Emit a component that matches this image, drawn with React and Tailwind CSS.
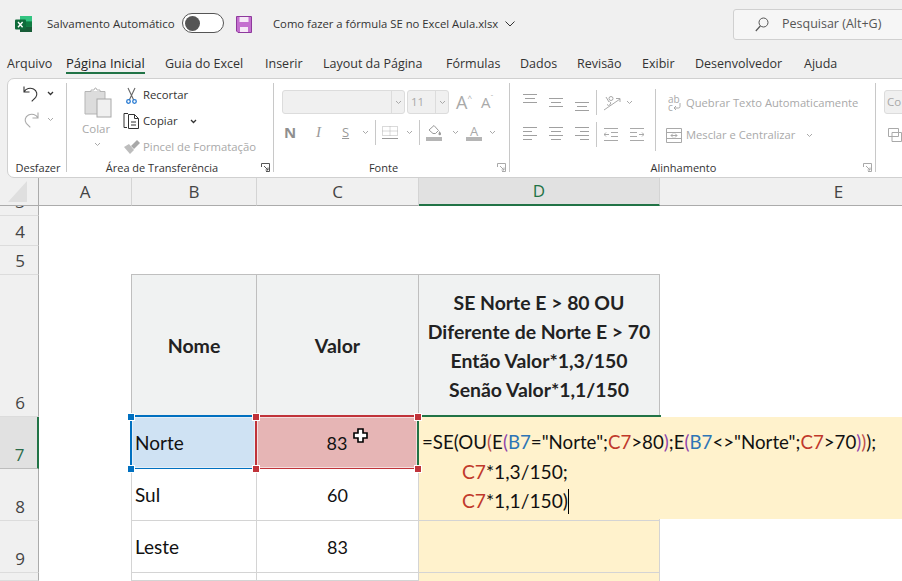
import React from "react";

const seg = "font-['Open_Sans','Noto_Sans',sans-serif]";
const cal = "font-['Lato','Noto_Sans',sans-serif]";

const Chev = ({ c = "#444", w = 7, sw = 1, className = "" }) => (
  <svg width={w} height="5" viewBox="0 0 7 5" className={`shrink-0 ${className}`}>
    <path d="M1 1l2.500 2.500L6 1" fill="none" stroke={c} strokeWidth={sw} />
  </svg>
);

const Launcher = ({ c = "#555" }) => (
  <svg width="9" height="9" viewBox="0 0 9 9" className="absolute right-[3px] top-[2px]">
    <path d="M.5 4V.5H8.500V8.500H5M3 3l4 4M7 4.500V7H4.500" fill="none" stroke={c} strokeWidth="1" />
  </svg>
);

const Excel = () => (
  <svg width="17" height="17" viewBox="0 0 17 17">
    <rect x="5" y="0" width="12" height="16" fill="#21a366" />
    <rect x="5" y="0" width="12" height="5.500" fill="#33c481" />
    <rect x="5" y="10.500" width="12" height="5.500" fill="#185c37" />
    <rect x="11" y="5.500" width="6" height="5" fill="#107c41" />
    <rect x="0" y="3.500" width="11" height="10" rx="1" fill="#0f6b3a" />
    <path d="M3 6l4.600 5.200M7.600 6L3 11.200" stroke="#fff" strokeWidth="1.400" />
  </svg>
);

const Save = () => (
  <svg width="16" height="17" viewBox="0 0 16 17">
    <path d="M.5.500h15v16H2L.5 15z" fill="#c46fcf" stroke="#8e3a9c" />
    <rect x="3.500" y="1" width="9" height="5" fill="#f6e9f7" />
    <rect x="4" y="11" width="8" height="5" fill="#f6e9f7" />
  </svg>
);

const Undo = ({ c, flip }) => (
  <svg width="16" height="17" viewBox="0 0 16 17" className={flip ? "-scale-x-100" : ""}>
    <path d="M1 1.500V7h5.500M1.200 6.800C3 3.500 7 2.300 10.500 4c3.500 1.800 4.300 5.600 2.200 8.300l-4 4" fill="none" stroke={c} strokeWidth="1.100" />
  </svg>
);

const Clipboard = () => (
  <svg width="28" height="31" viewBox="0 0 28 31">
    <path d="M1 4.500h20V27H1z" fill="#dcdcdc" stroke="#b5b5b5" />
    <path d="M7 4.500V3h3l1-2h1l1 2h3v1.500" fill="#fff" stroke="#b5b5b5" />
    <rect x="13" y="12" width="14" height="18" fill="#f0f0f0" stroke="#a8a8a8" />
  </svg>
);

const Scissors = () => (
  <svg width="11" height="17" viewBox="0 0 11 17">
    <path d="M2 1l5.700 12M9 1L3.300 13" fill="none" stroke="#666" strokeWidth="1.100" />
    <circle cx="2.500" cy="14.500" r="1.800" fill="none" stroke="#2b7cd3" strokeWidth="1.300" />
    <circle cx="8.500" cy="14.500" r="1.800" fill="none" stroke="#2b7cd3" strokeWidth="1.300" />
  </svg>
);

const Copy = () => (
  <svg width="17" height="16" viewBox="0 0 17 16">
    <path d="M5 .5H1v14h3" fill="none" stroke="#333" />
    <path d="M5.500 1.500h6l4 4v10h-10zM11.500 1.500v4h4M8 9h5M8 12h5" fill="none" stroke="#333" />
  </svg>
);

const Brush = () => (
  <svg width="18" height="16" viewBox="0 0 18 16">
    <path d="M1 8l6 7 4-4-5-6z" fill="#bdbdbd" />
    <path d="M8 7l6-6 3 3-6 6z" fill="#a8a8a8" />
  </svg>
);

const Lines = ({ ws, gap = 4 }) => (
  <svg width="14" height={(ws.length - 1) * gap + 1} className="block shrink-0">
    {ws.map(([x, w], i) => (
      <rect key={i} x={x} y={i * gap} width={w} height="1" fill="#a0a0a0" />
    ))}
  </svg>
);

const VSep = ({ h = "h-[25px]", cn = "" }) => <div className={`w-px shrink-0 bg-[#c8c8c8] ${h} ${cn}`} />;

const Group = ({ w, label, launcher, children, labelCn = "", lc }) => (
  <div className={`${w} shrink-0 h-[89px] mt-[4px] border-r border-[#c8c8c8] flex flex-col`}>
    <div className="flex-1 min-h-0">{children}</div>
    <div className={`relative h-[14px] -mb-[3px] text-[11px] leading-[14px] text-[#333] text-center ${labelCn}`}>
      {label}
      {launcher && <Launcher c={lc} />}
    </div>
  </div>
);

const gray = "text-[#a9a9a9]";
const tabs = [
  ["Arquivo", "w-[59px]"],
  ["Página Inicial", "w-[99px]", true],
  ["Guia do Excel", "w-[100px]"],
  ["Inserir", "w-[58px]"],
  ["Layout da Página", "w-[123px]"],
  ["Fórmulas", "w-[74px]"],
  ["Dados", "w-[57px]"],
  ["Revisão", "w-[65px]"],
  ["Exibir", "w-[53px]"],
  ["Desenvolvedor", "w-[109px]"],
  ["Ajuda", "w-[40px]"],
];

const RowH = ({ n, sel }) => (
  <div className={`relative overflow-hidden flex items-end justify-center pb-[3px] text-[17px] leading-[20px] border-r border-[#ababab] ${sel ? "bg-[#e1e1e1] text-[#2b6b49] border-r-2 border-r-[#217346] border-b border-b-[#bdbdbd]" : "bg-[#f0f0f0] text-[#444] border-b border-b-[#dcdcdc]"} pl-[2px]`}>
    {n}
  </div>
);

const Col = ({ l, sel }) => (
  <div className={`flex items-center justify-center text-[17px] border-r border-r-[#d4d4d4] ${sel ? "bg-[#e1e1e1] text-[#217346] border-b-2 border-b-[#217346]" : "bg-[#f0f0f0] text-[#444] border-b border-b-[#ababab]"}`}>
    {l}
  </div>
);

const Handle = ({ cn }) => <div className={`absolute w-[6px] h-[6px] outline outline-1 outline-white ${cn}`} />;

const R = ({ children }) => <span className="text-[#c0392b]">{children}</span>;
const B = ({ children }) => <span className="text-[#2e75b6]">{children}</span>;
const P = ({ children }) => <span className="text-[#8e44ad]">{children}</span>;
const M = ({ children }) => <span className="text-[#c0504d]">{children}</span>;

const bodyB = "border-b border-r border-[#d4d4d4] bg-white";
const nameT = `flex items-center pl-[3px] pt-[2px] text-[19px] text-[#111] ${cal}`;
const numT = `flex items-center justify-center pt-[2px] text-[18px] text-[#111] ${cal}`;

export default function App() {
  return (
    <div className={`w-[902px] h-[581px] overflow-hidden bg-[#f0f0f0] flex flex-col text-[#333] ${seg}`}>
      {/* title bar */}
      <div className="h-[48px] shrink-0 flex items-center overflow-hidden">
        <div className="ml-[15px] shrink-0"><Excel /></div>
        <span className="ml-[15px] shrink-0 text-[11.500px] w-[135px] whitespace-nowrap -mt-[1px]">Salvamento Automático</span>
        <div className="shrink-0 w-[42px] h-[20px] -mt-[2px] rounded-full border border-[#555] bg-white flex items-center pl-[2px]">
          <div className="w-[15px] h-[15px] rounded-full bg-[#555]" />
        </div>
        <div className="ml-[12px] shrink-0"><Save /></div>
        <span className="ml-[21px] shrink-0 text-[11.300px] w-[232px] whitespace-nowrap">Como fazer a fórmula SE no Excel Aula.xlsx</span>
        <svg width="10" height="6" viewBox="0 0 10 6" className="shrink-0"><path d="M.5.500L5 5 9.500.5" fill="none" stroke="#333" /></svg>
        <div className="ml-[218px] w-[180px] h-[31px] rounded-[3px] border border-[#d0d0d0] bg-[#f6f6f6] flex items-center pl-[21px] shrink-0">
          <svg width="14" height="15" viewBox="0 0 14 15"><circle cx="8.500" cy="5.500" r="4.500" fill="none" stroke="#555" /><path d="M5.300 9L.8 14" stroke="#555" strokeWidth="1.200" /></svg>
          <span className="ml-[13px] text-[12.500px] text-[#555] whitespace-nowrap">Pesquisar (Alt+G)</span>
        </div>
      </div>

      {/* tabs */}
      <div className="h-[30px] shrink-0 flex pl-[7px] text-[12.500px] text-[#333]">
        {tabs.map(([t, w, a]) => (
          <div key={t} className={`${w} shrink-0 whitespace-nowrap`}>
            <span className={`inline-block h-[26px] leading-[31px] ${a ? "font-medium text-[13px] text-[#222] border-b-2 border-[#217346]" : ""}`}>{t}</span>
          </div>
        ))}
      </div>

      {/* ribbon */}
      <div className="h-[100px] shrink-0 ml-[7px] -mr-[8px] bg-white border border-[#d0d0d0] rounded-[7px] flex overflow-hidden">
        <Group w="w-[59px]" label="Desfazer" labelCn="pl-[2px]">
          <div className="flex items-center pl-[15px] pt-[2px]">
            <Undo c="#333" />
            <Chev c="#333" sw={1.300} className="ml-[8px]" />
          </div>
          <div className="flex items-center pl-[15px] mt-[9px]">
            <Undo c="#a9a9a9" flip />
            <Chev c="#a9a9a9" className="ml-[8px]" />
          </div>
        </Group>

        <Group w="w-[207px]" label="Área de Transferência" launcher labelCn="pr-[16px]">
          <div className="flex">
            <div className="w-[56px] pl-[17px] pt-[4px] flex flex-col">
              <Clipboard />
              <span className={`text-[11.500px] mt-[3px] -ml-[2px] leading-[16px] ${gray}`}>Colar</span>
              <Chev c="#a9a9a9" className="ml-[10px] mt-[5px]" />
            </div>
            <div className="flex flex-col text-[11.300px]">
              <div className="h-[26px] flex items-center mt-[-1px]">
                <div className="w-[20px] pl-[3px] flex"><Scissors /></div>
                <span className="text-[#333]">Recortar</span>
              </div>
              <div className="h-[26px] flex items-center">
                <div className="w-[20px] flex"><Copy /></div>
                <span className="w-[47px] text-[#333]">Copiar</span>
                <Chev c="#333" sw={1.300} />
              </div>
              <div className="h-[26px] flex items-center">
                <div className="w-[20px] flex"><Brush /></div>
                <span className={`whitespace-nowrap ${gray}`}>Pincel de Formatação</span>
              </div>
            </div>
          </div>
        </Group>

        <Group w="w-[236px]" label="Fonte" launcher lc="#a9a9a9" labelCn="pr-[16px]">
          <div className="flex items-center pl-[8px] pt-[7px]">
            <div className="w-[123px] h-[24px] rounded-[3px] border border-[#dcdcdc] bg-[#f0f0f0] flex justify-end">
              <div className="w-[13px] border-l border-[#dcdcdc] flex items-center justify-center"><Chev c="#a9a9a9" /></div>
            </div>
            <div className="ml-[2px] w-[42px] h-[24px] rounded-[3px] border border-[#dcdcdc] bg-[#f0f0f0] flex justify-between">
              <span className={`pl-[3px] text-[11.500px] leading-[22px] ${gray}`}>11</span>
              <div className="w-[13px] border-l border-[#dcdcdc] flex items-center justify-center"><Chev c="#a9a9a9" /></div>
            </div>
            <span className={`ml-[7px] text-[18px] leading-[20px] ${gray}`}>A</span>
            <span className={`text-[8px] -mt-[8px] ${gray}`}>^</span>
            <span className={`ml-[9px] text-[15px] leading-[20px] ${gray}`}>A</span>
            <span className={`text-[7px] -mt-[8px] ${gray}`}>ˇ</span>
          </div>
          <div className="flex items-center pl-[10px] mt-[6px] h-[25px]">
            <span className="w-[32px] shrink-0 font-bold text-[15px] text-[#8f8f8f]">N</span>
            <span className="w-[26px] shrink-0 italic text-[15px] text-[#999] font-['Liberation_Serif',serif]">I</span>
            <span className="w-[20px] shrink-0 underline text-[13px] text-[#999]">S</span>
            <Chev c="#a9a9a9" />
            <VSep cn="ml-[6px]" />
            <svg width="16" height="14" viewBox="0 0 16 14" className="ml-[6px] shrink-0">
              <path d="M.5.500h15v9h-15z" fill="none" stroke="#b5b5b5" strokeDasharray="1 1" />
              <path d="M8 .5v9M.5 5h15" stroke="#b5b5b5" strokeDasharray="1 1" />
              <path d="M0 12.500h16" stroke="#999" />
            </svg>
            <Chev c="#a9a9a9" className="ml-[8px]" />
            <VSep cn="ml-[6px]" />
            <div className="ml-[6px] shrink-0 flex flex-col items-center w-[16px]">
              <svg width="15" height="11" viewBox="0 0 15 11"><path d="M2 5l5-4.500 4.500 5-3 3H6z" fill="none" stroke="#999" /><path d="M12.500 6c1 1.500 1.500 2 1.500 3a1 1 0 0 1-2.500 0c0-1 .5-1.500 1-3z" fill="#999" /></svg>
              <div className="w-[16px] h-[4px] bg-[#b5b5b5] mt-[1px]" />
            </div>
            <Chev c="#a9a9a9" className="ml-[10px]" />
            <div className="ml-[7px] shrink-0 flex flex-col items-center w-[16px]">
              <span className={`text-[13px] leading-[12px] ${gray}`}>A</span>
              <div className="w-[16px] h-[4px] bg-[#b5b5b5] mt-[0px]" />
            </div>
            <Chev c="#a9a9a9" className="ml-[7px]" />
          </div>
        </Group>

        <Group w="w-[366px]" label="Alinhamento" launcher lc="#a9a9a9" labelCn="pr-[18px]">
          <div className="flex h-[72px]">
            <div className="flex flex-col w-[86px] shrink-0 pl-[13px] pt-[7px]">
              <div className="flex items-start h-[25px] gap-[12px]">
                <div className="pt-[4px]"><Lines ws={[[0, 14], [2, 10], [0, 14]]} /></div>
                <div className="pt-[8px]"><Lines ws={[[0, 14], [2, 10], [0, 14]]} /></div>
                <div className="pt-[12px]"><Lines ws={[[0, 14], [2, 10], [0, 14]]} /></div>
                <VSep cn="-ml-[5px]" />
              </div>
              <div className="flex items-start h-[25px] mt-[7px] gap-[12px]">
                <div className="pt-[5px]"><Lines ws={[[0, 14], [0, 9], [0, 14], [0, 9]]} /></div>
                <div className="pt-[5px]"><Lines ws={[[0, 14], [2, 10], [0, 14], [2, 10]]} /></div>
                <div className="pt-[5px]"><Lines ws={[[0, 14], [5, 9], [0, 14], [5, 9]]} /></div>
                <VSep cn="-ml-[5px]" />
              </div>
            </div>
            <div className="w-[59px] shrink-0 flex flex-col pt-[7px]">
              <div className="flex items-center h-[25px] pl-[7px]">
                <svg width="18" height="16" viewBox="0 0 18 16">
                  <path d="M1 15L17 4M13 3.500h4V7" fill="none" stroke="#a9a9a9" />
                  <circle cx="8" cy="3.500" r="2" fill="none" stroke="#a9a9a9" />
                  <path d="M3 2l3 5M4 9.500a2 2 0 1 0 2.500-3" fill="none" stroke="#a9a9a9" />
                </svg>
                <Chev c="#a9a9a9" className="ml-[5px]" />
              </div>
              <div className="flex items-center h-[25px] mt-[7px] pl-[8px] gap-[12px]">
                <svg width="14" height="13" viewBox="0 0 14 13"><path d="M0 .5h14M0 12.500h14M7 4.500h7M7 8.500h7M0 6.500h5M0 6.500l2-2M0 6.500l2 2" fill="none" stroke="#a9a9a9" /></svg>
                <svg width="14" height="13" viewBox="0 0 14 13"><path d="M0 .5h14M0 12.500h14M0 4.500h7M0 8.500h7M9 6.500h5M14 6.500l-2-2M14 6.500l-2 2" fill="none" stroke="#a9a9a9" /></svg>
              </div>
            </div>
            <div className="flex flex-col pt-[1px] border-l border-[#c8c8c8] h-[62px] mt-[6px] pl-[10px]">
              <div className={`flex items-center h-[26px] text-[11.200px] ${gray} whitespace-nowrap`}>
                <div className="w-[20px] shrink-0 pl-[2px] flex flex-col text-[10px] leading-[8px]">
                  <span>ab</span>
                  <div className="flex items-center">
                    <span>c</span>
                    <svg width="8" height="8" viewBox="0 0 8 8"><path d="M7 0v3.500a1.500 1.500 0 0 1-1.500 1.500H1M3 3L1 5l2 2" fill="none" stroke="#a9a9a9" /></svg>
                  </div>
                </div>
                <span>Quebrar Texto Automaticamente</span>
              </div>
              <div className={`flex items-center h-[26px] mt-[6px] text-[11.200px] ${gray} whitespace-nowrap`}>
                <svg width="16" height="15" viewBox="0 0 16 15" className="mr-[4px]"><path d="M.5.500h15v14H.5zM.5 4.500h15M.5 10.500h15M5 7.500h6M5 7.500l2-2M5 7.500l2 2M11 7.500l-2-2M11 7.500l-2 2" fill="none" stroke="#a9a9a9" /></svg>
                <span className="w-[120px]">Mesclar e Centralizar</span>
                <Chev c="#a9a9a9" />
              </div>
            </div>
          </div>
        </Group>

        <div className="flex-1 h-[89px] mt-[4px] pl-[8px] pt-[7px]">
          <div className={`w-[30px] h-[24px] rounded-[3px] border border-[#dcdcdc] bg-[#f0f0f0] text-[11.500px] leading-[22px] pl-[2px] ${gray}`}>Co</div>
          <svg width="14" height="14" viewBox="0 0 14 14" className="ml-[4px] mt-[14px]"><path d="M.5.500h10v8H.5zM4 4.500h9.500v9H4z" fill="#fff" stroke="#a9a9a9" /></svg>
        </div>
      </div>

      {/* sheet */}
      <div className="relative flex-1 min-h-0 overflow-hidden bg-white grid grid-cols-[39px_93px_125px_162px_241px_358px] grid-rows-[28px_10px_30px_29px_142px_52px_52px_52px_1fr]">
        {/* header */}
        <div className="bg-[#f0f0f0] border-b border-[#ababab] border-r border-r-[#ababab] flex items-center justify-center">
          <div className="ml-[-3px] w-0 h-0 border-l-[19px] border-l-transparent border-b-[21px] border-b-[#dfdfdf]" />
        </div>
        <Col l="A" /><Col l="B" /><Col l="C" /><Col l="D" sel /><Col l="E" />

        <RowH n="3" /><div className="col-span-5" />
        <RowH n="4" /><div className="col-span-5" />
        <RowH n="5" /><div className="col-span-5 border-b border-[#bfbfbf] ml-[92px] mr-[358px]" />

        <RowH n="6" />
        <div />
        <div className={`bg-[#f0f2f2] border-r border-l -ml-px border-[#bfbfbf] flex items-center justify-center font-bold text-[19.500px] text-[#222] ${cal}`}>Nome</div>
        <div className={`bg-[#f0f2f2] border-r border-[#bfbfbf] flex items-center justify-center font-bold text-[19.500px] text-[#222] ${cal}`}>Valor</div>
        <div className={`bg-[#f0f2f2] border-r border-[#bfbfbf] flex flex-col items-center justify-center font-bold text-[19.400px] leading-[29px] text-[#222] ${cal} whitespace-nowrap`}>
          <span>SE Norte E &gt; 80 OU</span>
          <span>Diferente de Norte E &gt; 70</span>
          <span>Então Valor*1,3/150</span>
          <span>Senão Valor*1,1/150</span>
        </div>
        <div />

        <RowH n="7" sel />
        <div />
        <div className={`-ml-[2px] -mt-[2px] -mb-px bg-[#cfe2f3] border-2 border-[#0070c0] shadow-[inset_0_0_0_1px_#e4eff8] ${nameT}`}>Norte</div>
        <div className={`-ml-[2px] -mt-[2px] -mb-px bg-[#e6b5b5] border-2 border-[#c0333a] shadow-[inset_0_0_0_1px_#f5dede] ${numT}`}>83</div>
        <div className="bg-[#fff2cc]" />
        <div />

        <RowH n="8" />
        <div />
        <div className={`${bodyB} border-l -ml-px ${nameT}`}>Sul</div>
        <div className={`${bodyB} ${numT}`}>60</div>
        <div className="bg-[#fff2cc] border-b border-r border-[#d4d4d4]" />
        <div />

        <RowH n="9" />
        <div />
        <div className={`${bodyB} border-l -ml-px ${nameT}`}>Leste</div>
        <div className={`${bodyB} ${numT}`}>83</div>
        <div className="bg-[#fff2cc] border-b border-r border-[#d4d4d4]" />
        <div />

        <RowH n="" />
        <div />
        <div className={`${bodyB} border-l -ml-px`} />
        <div className={bodyB} />
        <div className="bg-[#fff2cc] border-r border-[#d4d4d4]" />
        <div />

        {/* formula overlay */}
        <div className={`absolute left-[419px] top-[239px] right-0 h-[102px] bg-[#fff2cc] pl-[3px] pt-[11px] text-[18.700px] leading-[29px] text-[#111] whitespace-nowrap ${cal}`}>
          <div>=SE(OU<M>(</M>E<P>(</P><B>B7</B>="Norte";<R>C7</R>&gt;80<P>)</P>;E<P>(</P><B>B7</B>&lt;&gt;"Norte";<R>C7</R>&gt;70<P>)</P><M>)</M>);</div>
          <div className="pl-[40px] text-[19.200px]"><R>C7</R>*1,3/150;</div>
          <div className="pl-[40px] text-[19.200px]"><R>C7</R>*1,1/150)<span className="inline-block w-px h-[25px] bg-black align-[-6px]" /></div>
        </div>
        <div className="absolute left-[418px] top-[237px] w-[243px] h-[2px] bg-[#217346]" />
        <div className="absolute left-[417px] top-[237px] w-[2px] h-[53px] bg-[#217346]" />

        {/* selection handles */}
        <Handle cn="left-[128px] top-[236px] bg-[#0070c0]" />
        <Handle cn="left-[128px] top-[288px] bg-[#0070c0]" />
        <Handle cn="left-[253px] top-[236px] bg-[#c0333a]" />
        <Handle cn="left-[253px] top-[288px] bg-[#c0333a]" />
        <Handle cn="left-[415px] top-[236px] bg-[#c0333a]" />
        <Handle cn="left-[415px] top-[288px] bg-[#c0333a]" />

        {/* mouse cursor */}
        <svg width="15" height="15" viewBox="0 0 15 15" className="absolute left-[353px] top-[250px]">
          <path d="M5 1h5v4h4v5h-4v4H5v-4H1V5h4z" fill="#fff" stroke="#000" strokeWidth="1.600" />
        </svg>
      </div>
    </div>
  );
}
